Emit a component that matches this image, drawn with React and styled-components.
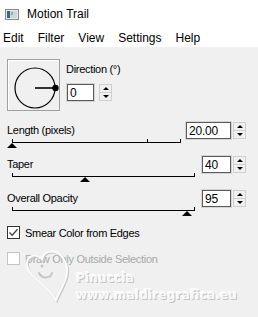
import React from "react";
import styled, {createGlobalStyle} from "styled-components";

const GlobalStyle = createGlobalStyle`
  html, body {
    margin: 0;
    padding: 0;
    background: #f0f0f0;
  }

  body {
    font-family: "Liberation Sans", Arial, sans-serif;
    color: #000;
  }
`;

const Window = styled.div`
  width: 258px;
  height: 317px;
  overflow: hidden;
  position: relative;
  background: #f0f0f0;
  display: flex;
  flex-direction: column;
`;

const TitleBar = styled.div`
  height: 28px;
  background: #fff;
  display: flex;
  align-items: center;
  gap: 8px;
  padding-left: 5px;
  font-size: 12px;
`;

const MenuBar = styled.div`
  height: 19px;
  background: #fff;
  display: flex;
  align-items: center;
  gap: 14px;
  padding-left: 3px;
  font-size: 12px;
`;

const Content = styled.div`
  padding: 12px 12px 0 7px;
  display: flex;
  flex-direction: column;
  font-size: 11px;
  letter-spacing: -0.3px;
`;

const DirectionRow = styled.div`
  display: flex;
  align-items: flex-start;
`;

const DialFrame = styled.div`
  width: 51px;
  height: 50px;
  border: 1px solid #a0a0a0;
  box-shadow: inset 1px 1px 0 #fff;
`;

const DirectionSide = styled.div`
  display: flex;
  flex-direction: column;
  margin-left: 6px;
  padding-top: 2px;
`;

const Label = styled.div`
  height: 16px;
  line-height: 16px;
  white-space: nowrap;
  color: ${p => (p.$disabled ? "#a8a8a8" : "#000")};
`;

const FieldRow = styled.div`
  display: flex;
  align-items: flex-start;
  margin-top: ${p => p.$top || 0}px;
  margin-left: ${p => p.$left || 0}px;
`;

const Field = styled.div`
  width: ${p => p.$w}px;
  height: 17px;
  box-sizing: border-box;
  background: #fff;
  border: 1px solid #5a5a5a;
  box-shadow: 0 0 0 1px #d4d4d4;
  font-size: 12px;
  line-height: 16px;
  padding-left: 2px;
  letter-spacing: -0.2px;
`;

const Spinner = styled.div`
  width: 13px;
  height: 17px;
  margin-left: ${p => p.$gap || 2}px;
  box-sizing: border-box;
  border: 1px solid #cfcfcf;
  display: flex;
  flex-direction: column;
`;

const SpinHalf = styled.div`
  flex: 1;
  display: flex;
  align-items: center;
  justify-content: center;

  & + & {
    border-top: 1px solid #cfcfcf;
  }

  &::after {
    content: "";
    border-left: 3px solid transparent;
    border-right: 3px solid transparent;
    ${p => (p.$down ? "border-top: 3px solid #000;" : "border-bottom: 3px solid #000;")}
  }
`;

const SliderGroup = styled.div`
  display: flex;
  align-items: flex-start;
  margin-top: ${p => p.$top}px;
`;

const SliderCol = styled.div`
  display: flex;
  flex-direction: column;
`;

const Track = styled.div`
  position: relative;
  width: ${p => p.$w}px;
  height: 10px;
  margin-left: 5px;

  &::before {
    content: "";
    position: absolute;
    left: 0;
    right: 0;
    top: 4px;
    height: 1px;
    background: #000;
  }
`;

const Tick = styled.span`
  position: absolute;
  top: 1px;
  width: 1px;
  height: 4px;
  background: #000;
`;

const Thumb = styled.span`
  position: absolute;
  top: 5px;
  transform: translateX(-50%);
  border-left: 5px solid transparent;
  border-right: 5px solid transparent;
  border-bottom: 5px solid #000;
`;

const Inputs = styled.div`
  margin-left: auto;
  display: flex;
  align-items: flex-start;
`;

const CheckRow = styled.div`
  display: flex;
  align-items: center;
  gap: 5px;
  height: 13px;
  margin-top: ${p => p.$top}px;
`;

const Box = styled.div`
  width: 13px;
  height: 13px;
  box-sizing: border-box;
  background: #fff;
  border: 1px solid ${p => (p.$disabled ? "#c4c4c4" : "#333")};
  display: flex;
  align-items: center;
  justify-content: center;
`;

const Watermark = styled.div`
  position: absolute;
  left: 20px;
  top: 246px;
  display: flex;
  align-items: flex-start;
  pointer-events: none;
`;

const MarkText = styled.div`
  margin-left: -2px;
  margin-top: 24px;
  font-family: "DejaVu Sans", sans-serif;
  font-weight: bold;
  font-size: 12px;
  line-height: 17px;
  color: #f8f8f8;
  text-shadow: 1px 1px 0 #c2c2c2, -1px -1px 0 #fff;
  letter-spacing: 0.2px;
`;

const AppIcon = () => (
    <svg width="14" height="11" viewBox="0 0 14 11">
        <rect x="0.5" y="0.5" width="13" height="10" fill="#e8e8e8" stroke="#8a8a8a"/>
        <rect x="2" y="2" width="3" height="7" fill="#2f6f78"/>
        <rect x="5" y="2" width="7" height="7" fill="#cfd6d8"/>
        <rect x="6" y="3" width="2" height="3" fill="#9aa8ac"/>
    </svg>
);

const Dial = () => (
    <svg width="51" height="50" viewBox="0 0 51 50">
        <circle cx="27" cy="28" r="20" fill="none" stroke="#000" strokeWidth="1.2"/>
        <line x1="27" y1="28" x2="47" y2="28" stroke="#333" strokeWidth="2"/>
        <circle cx="47.5" cy="28" r="3.2" fill="#000"/>
    </svg>
);

const Spin = ({gap}) => (
    <Spinner $gap={gap}>
        <SpinHalf/>
        <SpinHalf $down/>
    </Spinner>
);

const Slider = ({label, width, value, ticks = [], top, fieldW, text}) => (
    <SliderGroup $top={top}>
        <SliderCol>
            <Label>{label}</Label>
            <Track $w={width}>
                <Tick style={{left: 0}}/>
                {ticks.map(t => <Tick key={t} style={{left: `${t}%`}}/>)}
                <Tick style={{right: 0}}/>
                <Thumb style={{left: `${value}%`}}/>
            </Track>
        </SliderCol>
        <Inputs>
            <Field $w={fieldW}>{text}</Field>
            <Spin/>
        </Inputs>
    </SliderGroup>
);

const HEART = "M44 14 C38 2 24 4 22 13 C15 6 3 11 8 23 C13 34 30 42 36 54 C41 42 53 26 44 14 Z";

const App = () => {
    return (
        <Window>
            <GlobalStyle/>
            <TitleBar>
                <AppIcon/>
                <span>Motion Trail</span>
            </TitleBar>
            <MenuBar>
                <span>Edit</span>
                <span>Filter</span>
                <span>View</span>
                <span>Settings</span>
                <span>Help</span>
            </MenuBar>

            <Content>
                <DirectionRow>
                    <DialFrame>
                        <Dial/>
                    </DialFrame>
                    <DirectionSide>
                        <Label>Direction (°)</Label>
                        <FieldRow $top={7} $left={1}>
                            <Field $w={27}>0</Field>
                            <Spin gap={5}/>
                        </FieldRow>
                    </DirectionSide>
                </DirectionRow>

                <Slider label="Length (pixels)" width={169} value={0} ticks={[80]} top={11} fieldW={45} text="20.00"/>
                <Slider label="Taper" width={183} value={40} top={8} fieldW={29} text="40"/>
                <Slider label="Overall Opacity" width={183} value={95.5} top={8} fieldW={29} text="95"/>

                <CheckRow $top={10}>
                    <Box>
                        <svg width="11" height="11" viewBox="0 0 11 11">
                            <path d="M1.5 5.5 L4.2 8.3 L9.5 2.2" fill="none" stroke="#444" strokeWidth="1.3"/>
                        </svg>
                    </Box>
                    <Label>Smear Color from Edges</Label>
                </CheckRow>
                <CheckRow $top={13}>
                    <Box $disabled/>
                    <Label $disabled>Draw Only Outside Selection</Label>
                </CheckRow>
            </Content>

            <Watermark>
                <svg width="58" height="58" viewBox="0 0 58 58">
                    <g fill="none" strokeWidth="2" strokeLinecap="round">
                        <path d={HEART} stroke="#c6c6c6" transform="translate(1 1)"/>
                        <path d={HEART} stroke="#fbfbfb"/>
                        <path d="M19 27 C22 33 30 33 32 27" stroke="#c6c6c6"/>
                        <circle cx="22" cy="20" r="1.5" fill="#c6c6c6" stroke="none"/>
                    </g>
                </svg>
                <MarkText>
                    <div>Pinuccia</div>
                    <div>www.maldiregrafica.eu</div>
                </MarkText>
            </Watermark>
        </Window>
    );
};

export default App;
